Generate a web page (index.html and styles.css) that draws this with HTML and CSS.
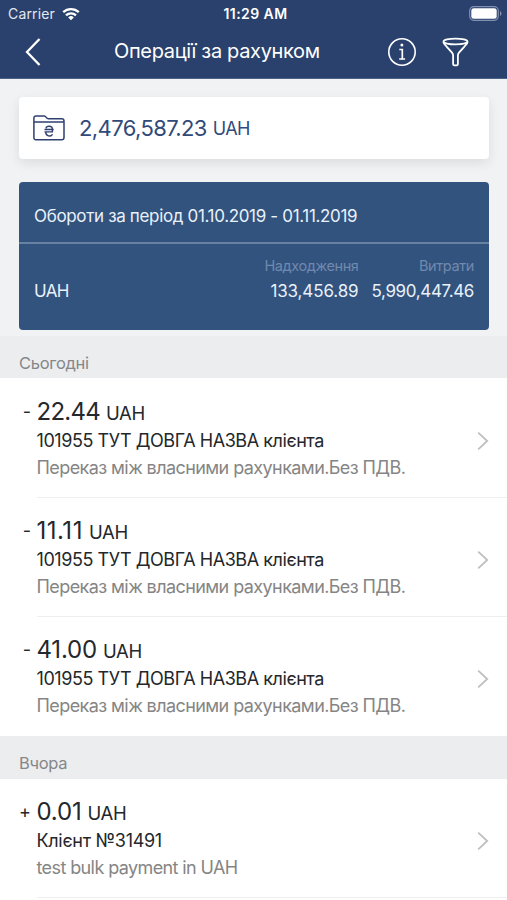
FILE: index.html
```html
<!DOCTYPE html>
<html lang="uk">
<head>
<meta charset="utf-8">
<title>Операції за рахунком</title>
<link rel="stylesheet" href="styles.css">
</head>
<body>
<header class="top">
  <div class="status">
    <div class="carrier"><span>Carrier</span>
      <svg width="18" height="14" viewBox="0 0 18 14"><g fill="none" stroke="#fff" stroke-width="2.3"><path d="M1.2 5.2a11.2 11.2 0 0 1 15.6 0"/><path d="M4 8.3a7.2 7.2 0 0 1 10 0"/></g><path d="M9 13.2 6.2 10.4a4 4 0 0 1 5.6 0z" fill="#fff"/></svg>
    </div>
    <div class="clock">11:29 AM</div>
    <svg class="battery" width="33" height="15" viewBox="0 0 33 15"><rect x=".7" y=".7" width="28.6" height="13.6" rx="4" fill="none" stroke="#8291b0" stroke-width="1.2"/><rect x="2.3" y="2.3" width="25.4" height="10.4" rx="2.5" fill="#fff"/><path d="M31 5v5q1.5-.8 1.5-2.500T31 5z" fill="#8291b0"/></svg>
  </div>
  <div class="nav">
    <svg class="back" width="18" height="30" viewBox="0 0 18 30"><path d="M15.500 2 3 15l12.500 13" fill="none" stroke="#fff" stroke-width="2.300"/></svg>
    <h1 class="heading">Операції за рахунком</h1>
    <div class="tools">
      <svg width="30" height="30" viewBox="0 0 30 30" fill="none" stroke="#fff" stroke-width="1.600"><circle cx="15" cy="15" r="13.200"/><path d="M12.300 12.500H15.300V22M12.200 22h5.900" stroke-width="1.700"/><circle cx="14.900" cy="8" r="1.500" fill="#fff" stroke="none"/></svg>
      <svg width="28" height="30" viewBox="0 0 28 30" fill="none" stroke="#fff" stroke-width="1.800" stroke-linejoin="round"><ellipse cx="13.500" cy="4.500" rx="12" ry="2.900"/><path d="M1.500 5c0 1.600 1.500 2.800 3.300 4.800l5 5.600q1.300 1.500 1.300 3.200v8.300c0 2 4.800 2 4.800 0v-8.300q0-1.700 1.300-3.200l5-5.600c1.800-2 3.300-3.200 3.300-4.800"/></svg>
    </div>
  </div>
</header>
<section class="summary">
  <div class="balance">
    <svg width="32" height="26" viewBox="0 0 32 26" fill="none" stroke="#2f3f70" stroke-width="1.500" stroke-linejoin="round"><path d="M.9 22.500V3.200Q.9 1 3.100 1h8.300c1.800 0 1.800 2.800 3.900 2.800h13.400q2.300 0 2.300 2.200v16.500q0 2.300-2.300 2.300H3.100q-2.200 0-2.200-2.300zM1 6.900h30"/><path d="M13 13.300c.4-2.900 6.200-2.800 6.400.5v3.100h-7.900M11.500 14.500h9.200M12.800 17c-.2 4.600 5.400 5.100 6.700 2.300" stroke-width="1.400"/></svg>
    <span class="sum">2,476,587.23</span><span class="cur">UAH</span>
  </div>
  <div class="turnover">
    <div class="period">Обороти за період 01.10.2019 - 01.11.2019</div>
    <div class="totals">
      <div class="code">UAH</div>
      <div class="total"><div class="label in">Надходження</div><div class="value">133,456.89</div></div>
      <div class="total"><div class="label">Витрати</div><div class="value out">5,990,447.46</div></div>
    </div>
  </div>
</section>
<h2 class="day"><span class="today">Сьогодні</span></h2>
<ul class="list first">
  <li class="item"><span class="sign">-</span><div class="body"><div class="text"><div class="amount"><span class="num n1">22.44</span><span class="unit">UAH</span></div><div class="name">101955 ТУТ ДОВГА НАЗВА клієнта</div><div class="note">Переказ між власними рахунками.Без ПДВ.</div></div><svg class="go" width="12" height="20" viewBox="0 0 12 20"><path d="m1.200 1.700 9 8.300-9 8.300"/></svg></div></li>
  <li class="item"><span class="sign">-</span><div class="body"><div class="text"><div class="amount"><span class="num n2">11.11</span><span class="unit">UAH</span></div><div class="name">101955 ТУТ ДОВГА НАЗВА клієнта</div><div class="note">Переказ між власними рахунками.Без ПДВ.</div></div><svg class="go" width="12" height="20" viewBox="0 0 12 20"><path d="m1.200 1.700 9 8.300-9 8.300"/></svg></div></li>
  <li class="item"><span class="sign">-</span><div class="body"><div class="text"><div class="amount"><span class="num n3">41.00</span><span class="unit">UAH</span></div><div class="name">101955 ТУТ ДОВГА НАЗВА клієнта</div><div class="note">Переказ між власними рахунками.Без ПДВ.</div></div><svg class="go" width="12" height="20" viewBox="0 0 12 20"><path d="m1.200 1.700 9 8.300-9 8.300"/></svg></div></li>
</ul>
<h2 class="day later"><span class="yesterday">Вчора</span></h2>
<ul class="list">
  <li class="item"><span class="sign">+</span><div class="body"><div class="text"><div class="amount"><span class="num n4">0.01</span><span class="unit">UAH</span></div><div class="name short">Клієнт №31491</div><div class="note latin">test bulk payment in UAH</div></div><svg class="go" width="12" height="20" viewBox="0 0 12 20"><path d="m1.200 1.700 9 8.300-9 8.300"/></svg></div></li>
</ul>
</body>
</html>
```

FILE: styles.css
```css
* { box-sizing: border-box; }
body { margin: 0; height: 900px; overflow: hidden; background: #fff; color: #24272b; font-family: Inter, "Liberation Sans", sans-serif; white-space: nowrap; }
svg { display: block; flex: none; }
.top { height: 79px; background: #29416c; border-bottom: 1px solid #496486; color: #fff; }
.status { height: 27px; display: grid; grid-template-columns: 1fr auto 1fr; align-items: center; padding: 0 4px 0 8px; }
.carrier { display: flex; align-items: center; gap: 7px; font-size: 14px; letter-spacing: .15px; color: #e3e8f1; }
.clock { font-size: 14px; font-weight: 600; letter-spacing: .45px; }
.battery { justify-self: end; margin-right: 1px; }
.nav { height: 50px; display: flex; align-items: center; padding: 0 37px 0 24px; }
.heading { margin: 0 0 0 72px; width: 273px; font-size: 20px; font-weight: 400; letter-spacing: -.34px; line-height: 46px; padding-bottom: 2px; }
.tools { display: flex; gap: 25px; }
.summary { height: 257px; padding: 18px 18px 0 19px; background: #f0f2f3; }
.balance { height: 62px; display: flex; align-items: center; padding-left: 14px; border-radius: 4px; background: #fff; color: #314a7a; box-shadow: 0 4px 12px rgba(0,0,0,.09); }
.sum { margin-left: 14px; font-size: 22px; line-height: 28px; letter-spacing: -.6px; }
.cur { margin: 2px 0 0 6px; font-size: 18px; line-height: 26px; letter-spacing: -.6px; }
.turnover { height: 148px; margin-top: 23px; border-radius: 4px; background: #32537e; color: #e9f1fb; }
.period { height: 62px; padding: 6px 15px 0; border-bottom: 2px solid #6681a1; font-size: 17px; line-height: 56px; letter-spacing: -.34px; }
.totals { display: flex; padding: 11px 15px 0; }
.code { flex: 1; padding-top: 23px; font-size: 17px; line-height: 26px; letter-spacing: -.6px; }
.total { margin-left: 13px; text-align: right; }
.label { font-size: 14.5px; line-height: 22px; letter-spacing: -.4px; color: #7189ae; }
.value { font-size: 17px; line-height: 28px; letter-spacing: -.12px; }
.out { letter-spacing: -.36px; }
.day { margin: 0; height: 42px; padding: 10px 19px 0; background: #ecedef; color: #85878a; font-size: 16.500px; font-weight: 400; line-height: 34px; letter-spacing: -.3px; }
.later { height: 43px; }
.list { margin: 0; padding: 0; list-style: none; }
.first { padding-top: 1px; }
.item { display: flex; height: 119px; }
.sign { width: 37px; padding: 18px 6px 0 0; text-align: right; font-size: 18px; line-height: 30px; }
.body { flex: 1; display: flex; align-items: center; justify-content: space-between; padding: 6px 18px 0 0; border-bottom: 1px solid #eceeef; }
.first .item:last-child .body { border-bottom-color: transparent; }
.text { margin-left: -.5px; padding-bottom: 5px; }
.amount { display: flex; align-items: baseline; height: 30px; line-height: 30px; }
.num { font-size: 24px; }
.n1 { letter-spacing: -.75px; }
.n2 { letter-spacing: .5px; }
.n3 { letter-spacing: -.2px; }
.n4 { letter-spacing: -.2px; }
.unit { margin-left: 6px; font-size: 18.500px; letter-spacing: -.3px; }
.name { font-size: 18px; line-height: 27px; letter-spacing: -.44px; }
.short { letter-spacing: -.3px; }
.note { font-size: 18px; line-height: 27px; letter-spacing: -.58px; color: #858585; }
.latin { letter-spacing: -.6px; }
.go path { fill: none; stroke: #bfbfc2; stroke-width: 1.800; }
```
